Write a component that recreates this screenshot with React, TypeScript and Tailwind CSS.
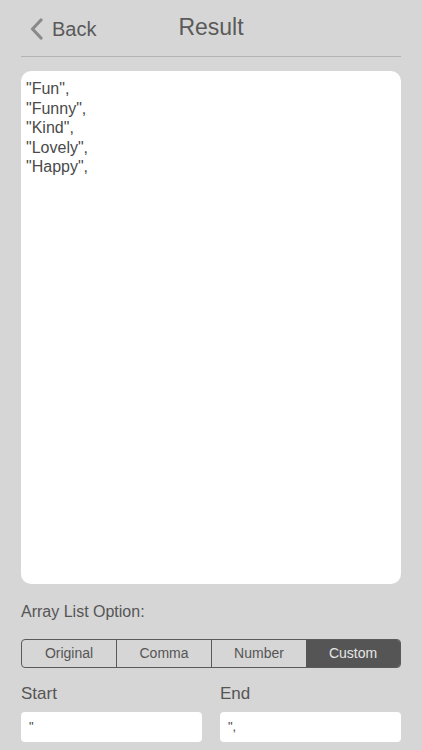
import React from "react";

export default function App() {
  const items = ['"Fun",', '"Funny",', '"Kind",', '"Lovely",', '"Happy",'];
  const segs = ["Original", "Comma", "Number", "Custom"];
  return (
    <div className="w-[422px] h-[750px] bg-[#d6d6d6] flex flex-col px-[21px] overflow-hidden" style={{ fontFamily: '"Liberation Sans", Arial, sans-serif' }}>
      <div className="relative h-[57px] flex items-center border-b border-[#b3b3b3]">
        <div className="flex items-center gap-[8px] pl-[8px] pt-[1px]">
          <svg width="15" height="22" viewBox="0 0 15 22">
            <path d="M12 2 L3.5 11 L12 20" fill="none" stroke="#8a8a8a" strokeWidth="3.2" strokeLinecap="round" strokeLinejoin="round" />
          </svg>
          <span className="text-[20px] text-[#5a5a5a]">Back</span>
        </div>
        <div className="absolute left-0 right-0 top-0 h-[55px] flex items-center justify-center pointer-events-none">
          <span className="text-[23px] text-[#5a5a5a]">Result</span>
        </div>
      </div>
      <div className="mt-[14px] h-[513px] bg-white rounded-[10px] px-[5px] pt-[8px] text-[16px] leading-[19.5px] text-[#4a4a4a]">
        {items.map((t) => (
          <div key={t}>{t}</div>
        ))}
      </div>
      <div className="mt-[18px] text-[16px] leading-[20px] text-[#555]">Array List Option:</div>
      <div className="mt-[17px] h-[29px] shrink-0 flex border border-[#5a5a5a] rounded-[4px] overflow-hidden">
        {segs.map((s, i) => (
          <div
            key={s}
            className={
              "flex-1 flex items-center justify-center text-[14px] " +
              (i === 3 ? "bg-[#555555] text-[#e6e6e6]" : "text-[#555] ") +
              (i > 0 && i < 3 ? " border-l border-[#5a5a5a]" : "")
            }
          >
            {s}
          </div>
        ))}
      </div>
      <div className="mt-[16px] flex gap-[18px]">
        <div className="flex-1 flex flex-col">
          <div className="text-[17px] text-[#555] leading-[20px]">Start</div>
          <div className="mt-[8px] h-[30px] bg-white rounded-[4px] px-[8px] flex items-center text-[13px] text-[#444]">"</div>
        </div>
        <div className="flex-1 flex flex-col">
          <div className="text-[17px] text-[#555] leading-[20px]">End</div>
          <div className="mt-[8px] h-[30px] bg-white rounded-[4px] px-[8px] flex items-center text-[13px] text-[#444]">",</div>
        </div>
      </div>
    </div>
  );
}
